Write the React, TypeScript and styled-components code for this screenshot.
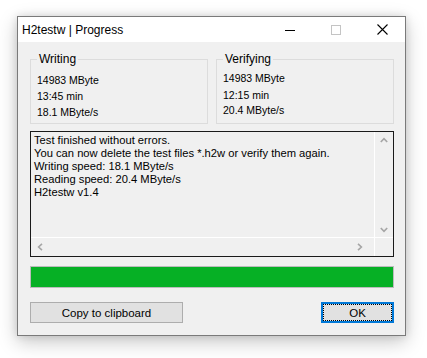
import React from 'react'
import styled, { createGlobalStyle } from 'styled-components'

const GlobalStyle = createGlobalStyle`
  html, body {
    margin: 0;
    padding: 0;
    background: #fff;
  }
`

const Page = styled.div`
  padding: 16px 0 0 17px;
  height: 358px;
  box-sizing: border-box;
`

const Window = styled.div`
  width: 389px;
  height: 320px;
  box-sizing: border-box;
  border: 1px solid #7a7a7a;
  background: #f0f0f0;
  box-shadow: 0 6px 18px rgba(0, 0, 0, 0.22), 0 0 8px rgba(0, 0, 0, 0.12);
  display: flex;
  flex-direction: column;
  font-family: 'Liberation Sans', Arial, sans-serif;
  color: #000;
`

const TitleBar = styled.div`
  height: 25px;
  background: #fff;
  display: flex;
  align-items: center;
`

const Title = styled.div`
  flex: 1;
  padding-left: 4px;
  font-size: 12px;
`

const CaptionButton = styled.div`
  width: 46px;
  height: 25px;
  display: flex;
  align-items: center;
  justify-content: center;
`

const Body = styled.div`
  flex: 1;
  display: flex;
  flex-direction: column;
  padding: 10px 11px 0 12px;
`

const Groups = styled.div`
  display: flex;
  gap: 8px;
`

const Group = styled.fieldset`
  margin: 0;
  width: 178px;
  height: 72px;
  box-sizing: border-box;
  border: 1px solid #dcdcdc;
  padding: 0 0 0 6px;
`

const Legend = styled.legend`
  font-size: 12px;
  padding: 0 2px;
  margin-left: 0;
  line-height: 15px;
`

const GroupLines = styled.div<{ $shift: number }>`
  margin-top: ${(p) => 5 - p.$shift}px;
  font-size: 10.5px;
  line-height: 16px;
  display: flex;
  flex-direction: column;
`

const Line = styled.div<{ $gap?: number }>`
  margin-top: ${(p) => p.$gap ?? 0}px;
`

const LogBox = styled.div`
  margin-top: 7px;
  height: 126px;
  border: 1px solid #1a1a1a;
  display: grid;
  grid-template-columns: 1fr 18px;
  grid-template-rows: 1fr 18px;
  box-sizing: border-box;
`

const LogText = styled.div`
  padding: 2px 3px;
  font-size: 11.2px;
  line-height: 13px;
  white-space: pre;
  border-right: 1px solid #fff;
  border-bottom: 1px solid #fff;
`

const VScroll = styled.div`
  display: flex;
  flex-direction: column;
  justify-content: space-between;
  align-items: center;
  padding: 4px 0 3px;
  border-bottom: 1px solid #fff;
`

const HScroll = styled.div`
  display: flex;
  justify-content: space-between;
  align-items: center;
  padding: 0 10px 0 5px;
  border-right: 1px solid #fff;
`

const Progress = styled.div`
  margin-top: 9px;
  height: 22px;
  box-sizing: border-box;
  border: 1px solid #bcbcbc;
  background: #06b025;
`

const ButtonRow = styled.div`
  margin-top: 14px;
  display: flex;
  justify-content: space-between;
`

const Button = styled.div<{ $width: number; $focused?: boolean }>`
  width: ${(p) => p.$width}px;
  height: 21px;
  box-sizing: border-box;
  background: #e1e1e1;
  border: 1px solid ${(p) => (p.$focused ? '#0078d7' : '#adadad')};
  box-shadow: ${(p) => (p.$focused ? 'inset 0 0 0 1px #0078d7' : 'none')};
  outline: ${(p) => (p.$focused ? '1px dotted #000' : 'none')};
  outline-offset: -3px;
  display: flex;
  align-items: center;
  justify-content: center;
  font-size: 11.5px;
`

const Chevron = ({ dir }: { dir: 'up' | 'down' | 'left' | 'right' }) => {
  const rot = { up: 0, down: 180, left: 270, right: 90 }[dir]
  return (
    <svg width='8' height='8' viewBox='0 0 8 8' style={{ transform: `rotate(${rot}deg)` }}>
      <path d='M0.8 6 L4 2.6 L7.2 6' fill='none' stroke='#a6a6a6' strokeWidth='1.6' />
    </svg>
  )
}

const log = [
  'Test finished without errors.',
  'You can now delete the test files *.h2w or verify them again.',
  'Writing speed: 18.1 MByte/s',
  'Reading speed: 20.4 MByte/s',
  'H2testw v1.4',
].join('\n')

export default function App() {
  return (
    <Page>
      <GlobalStyle />
      <Window>
        <TitleBar>
          <Title>H2testw | Progress</Title>
          <CaptionButton>
            <svg width='10' height='10' viewBox='0 0 10 10'>
              <line x1='0' y1='5.5' x2='10' y2='5.5' stroke='#000' strokeWidth='1' />
            </svg>
          </CaptionButton>
          <CaptionButton>
            <svg width='10' height='10' viewBox='0 0 10 10'>
              <rect x='0.5' y='0.5' width='9' height='9' fill='none' stroke='#c4c4c4' strokeWidth='1' />
            </svg>
          </CaptionButton>
          <CaptionButton>
            <svg width='11' height='11' viewBox='0 0 11 11'>
              <path d='M0.5 0.5 L10.5 10.5 M10.5 0.5 L0.5 10.5' stroke='#000' strokeWidth='1.1' />
            </svg>
          </CaptionButton>
        </TitleBar>
        <Body>
          <Groups>
            <Group>
              <Legend>Writing</Legend>
              <GroupLines $shift={0}>
                <Line>14983 MByte</Line>
                <Line>13:45 min</Line>
                <Line>18.1 MByte/s</Line>
              </GroupLines>
            </Group>
            <Group>
              <Legend>Verifying</Legend>
              <GroupLines $shift={2}>
                <Line>14983 MByte</Line>
                <Line $gap={1}>12:15 min</Line>
                <Line $gap={-1}>20.4 MByte/s</Line>
              </GroupLines>
            </Group>
          </Groups>
          <LogBox>
            <LogText>{log}</LogText>
            <VScroll>
              <Chevron dir='up' />
              <Chevron dir='down' />
            </VScroll>
            <HScroll>
              <Chevron dir='left' />
              <Chevron dir='right' />
            </HScroll>
            <div />
          </LogBox>
          <Progress />
          <ButtonRow>
            <Button $width={153}>Copy to clipboard</Button>
            <Button $width={73} $focused>
              OK
            </Button>
          </ButtonRow>
        </Body>
      </Window>
    </Page>
  )
}
